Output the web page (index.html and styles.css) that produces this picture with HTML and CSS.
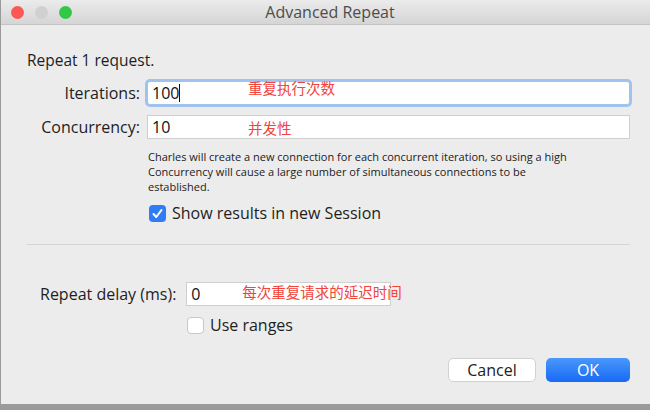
FILE: index.html
```html
<!DOCTYPE html>
<html lang="zh">
<head>
    <meta charset="UTF-8">
    <meta name="viewport" content="width=device-width, initial-scale=1.0">
    <title>Advanced Repeat</title>
    <link rel="stylesheet" href="styles.css">
</head>
<body>

    <div class="window">
        <div class="titlebar">
            <div class="lights">
                <span class="light red"></span>
                <span class="light gray"></span>
                <span class="light green"></span>
            </div>
            <div class="title">Advanced Repeat</div>
        </div>

        <div class="content">
            <p class="intro">Repeat 1 request.</p>

            <div class="row">
                <label class="label" for="iterations">Iterations:</label>
                <div class="field">
                    <div class="input focused" id="iterations">100<span class="caret"></span></div>
                    <span class="note note-iter">重复执行次数</span>
                </div>
            </div>

            <div class="row">
                <label class="label" for="concurrency">Concurrency:</label>
                <div class="field">
                    <div class="input" id="concurrency">10</div>
                    <span class="note note-conc">并发性</span>
                </div>
            </div>

            <p class="help">Charles will create a new connection for each concurrent iteration, so using a high Concurrency will cause a large number of simultaneous connections to be established.</p>

            <div class="check-row session">
                <span class="box checked">
                    <svg viewBox="0 0 17 17" width="17" height="17"><path d="M4.5 9 L7.3 12 L12.5 5" fill="none" stroke="#fff" stroke-width="2" stroke-linecap="round" stroke-linejoin="round"/></svg>
                </span>
                <span class="check-label">Show results in new Session</span>
            </div>

            <div class="separator"></div>

            <div class="delay-row">
                <label class="delay-label" for="delay">Repeat delay (ms):</label>
                <div class="field">
                    <div class="input small" id="delay">0</div>
                    <span class="note note-delay">每次重复请求的延迟时间</span>
                </div>
            </div>

            <div class="check-row ranges">
                <span class="box"></span>
                <span class="check-label">Use ranges</span>
            </div>

            <div class="buttons">
                <button class="btn cancel">Cancel</button>
                <button class="btn ok">OK</button>
            </div>
        </div>
    </div>

</body>
</html>
```

FILE: styles.css
```css
/* Okno dialogu */
body {
    margin: 0;
    font-family: "Open Sans", "Liberation Sans", sans-serif;
    background-color: #9a9a9a;
}

.window {
    width: 649px;
    height: 404px;
    margin-left: 1px;
    background-color: #ececec;
    overflow: hidden;
}

/* Pasek tytułu */
.titlebar {
    height: 24px;
    display: flex;
    align-items: center;
    background: linear-gradient(#ebebeb, #d5d5d5);
    border-bottom: 1px solid #c4c4c4;
}

.lights {
    display: flex;
    gap: 11px;
    padding-left: 10px;
}

.light {
    width: 13px;
    height: 13px;
    border-radius: 50%;
}
.red { background-color: #fc5753; }
.gray { background-color: #d0d0d0; }
.green { background-color: #33c748; }

.title {
    flex: 1;
    text-align: center;
    margin-right: 62px;
    font-size: 16px;
    color: #4d4d4d;
}

/* Zawartość */
.content {
    padding: 25px 20px 0 26px;
}

.intro {
    margin: 0 0 11px 0;
    font-size: 15.5px;
    line-height: 20px;
    color: #1e1e1e;
}

.row {
    display: flex;
    align-items: center;
    margin-bottom: 10px;
}

.label {
    width: 113px;
    margin-right: 7px;
    text-align: right;
    font-size: 16px;
    color: #1e1e1e;
}

.field {
    flex: 1;
    position: relative;
}

.input {
    height: 22px;
    line-height: 22px;
    padding-left: 4px;
    background-color: #fff;
    border: 1px solid #cfcfcf;
    font-size: 16px;
    color: #111;
}

.input.focused {
    border-color: #a3c3ea;
    box-shadow: 0 0 0 2px #9fc2ef;
    border-radius: 3px;
}

.caret {
    display: inline-block;
    width: 1px;
    height: 18px;
    background-color: #111;
    vertical-align: -3px;
}

.input.small {
    width: 199px;
}

/* Czerwone adnotacje */
.note {
    position: absolute;
    font-size: 14.5px;
    color: #f0443c;
    font-family: "Noto Sans CJK SC", sans-serif;
    line-height: 18px;
    white-space: nowrap;
}
.note-iter { left: 101px; top: -2px; }
.note-conc { left: 101px; top: 4px; }
.note-delay { left: 56px; top: 1px; }

.help {
    width: 440px;
    margin: 6px 0 0 121px;
    font-size: 11px;
    line-height: 15px;
    color: #222;
}

/* Pola wyboru */
.check-row {
    display: flex;
    align-items: center;
}

.session {
    margin: 8px 0 0 122px;
}

.box {
    width: 15px;
    height: 15px;
    border: 1px solid #c8c8c8;
    border-radius: 4px;
    background-color: #fff;
    margin-right: 6px;
}

.box.checked {
    width: 17px;
    height: 17px;
    border: none;
    background-color: #2f7cf6;
}

.check-label {
    font-size: 16px;
    color: #1e1e1e;
}

.separator {
    height: 1px;
    background-color: #d6d6d6;
    margin: 20px 0 0 0;
}

.delay-row {
    display: flex;
    align-items: center;
    margin-top: 37px;
}

.delay-label {
    margin: 0 10px 0 13px;
    font-size: 16px;
    color: #1e1e1e;
}

.delay-row .field {
    flex: none;
}

.ranges {
    margin: 8px 0 0 160px;
}

/* Przyciski */
.buttons {
    display: flex;
    justify-content: flex-end;
    gap: 10px;
    margin-top: 22px;
}

.btn {
    height: 24px;
    border-radius: 5px;
    font-family: inherit;
    font-size: 16px;
    padding: 0;
}

.cancel {
    width: 88px;
    background-color: #fff;
    border: 1px solid #d2d2d2;
    color: #222;
}

.ok {
    width: 84px;
    border: none;
    color: #fff;
    background: linear-gradient(#4a98fb, #1769f5);
}
```
